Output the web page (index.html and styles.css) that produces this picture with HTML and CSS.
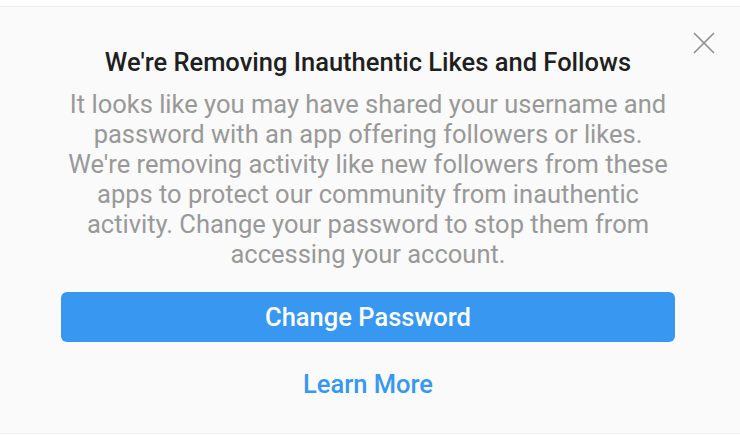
FILE: index.html
```html
<!DOCTYPE html>
<html lang="en">

<head>
  <meta charset="UTF-8">
  <meta name="viewport" content="width=device-width, initial-scale=1.0">
  <title>Removing Inauthentic Likes</title>
  <link rel="stylesheet" href="styles.css">
</head>

<body>
  <div class="sheet">
    <button class="close" type="button" aria-label="Close">
      <svg width="22" height="22" viewBox="0 0 22 22">
        <path d="M1 1L21 21M21 1L1 21" stroke="#8e8e8e" stroke-width="1.6" fill="none" />
      </svg>
    </button>
    <h1 class="title">We're Removing Inauthentic Likes and Follows</h1>
    <p class="message">It looks like you may have shared your username and<br>
      password with an app offering followers or likes.<br>
      We're removing activity like new followers from these<br>
      apps to protect our community from inauthentic<br>
      activity. Change your password to stop them from<br>
      accessing your account.</p>
    <button class="primary" type="button">Change Password</button>
    <a class="link" href="#">Learn More</a>
  </div>
</body>

</html>
```

FILE: styles.css
```css
html,
body {
  margin: 0;
  height: 100%;
  background: #fff;
}

body {
  font-family: Roboto, "Liberation Sans", sans-serif;
}

.sheet {
  position: relative;
  box-sizing: border-box;
  margin-top: 6px;
  height: 428px;
  background: #fafafa;
  border-top: 1px solid #efefef;
  border-bottom: 1px solid #efefef;
  padding: 0 65px 0 61px;
  display: flex;
  flex-direction: column;
  align-items: center;
}

.close {
  position: absolute;
  top: 25px;
  right: 25px;
  padding: 0;
  border: none;
  background: none;
  cursor: pointer;
}

.close svg {
  display: block;
}

.title {
  margin: 40px 0 0;
  font-size: 25.5px;
  font-weight: 500;
  line-height: 30px;
  color: #1f1f1f;
  text-align: center;
  white-space: nowrap;
}

.message {
  margin: 12px 0 0;
  font-size: 25.5px;
  line-height: 30px;
  color: #999;
  text-align: center;
  white-space: nowrap;
}

.primary {
  align-self: stretch;
  margin-top: 23px;
  height: 50px;
  border: none;
  border-radius: 6px;
  background: #3897f0;
  color: #fff;
  font-family: inherit;
  font-size: 25.5px;
  font-weight: 500;
  cursor: pointer;
}

.link {
  margin-top: 27px;
  font-size: 25.5px;
  font-weight: 500;
  line-height: 30px;
  color: #3897f0;
  text-decoration: none;
}
```
